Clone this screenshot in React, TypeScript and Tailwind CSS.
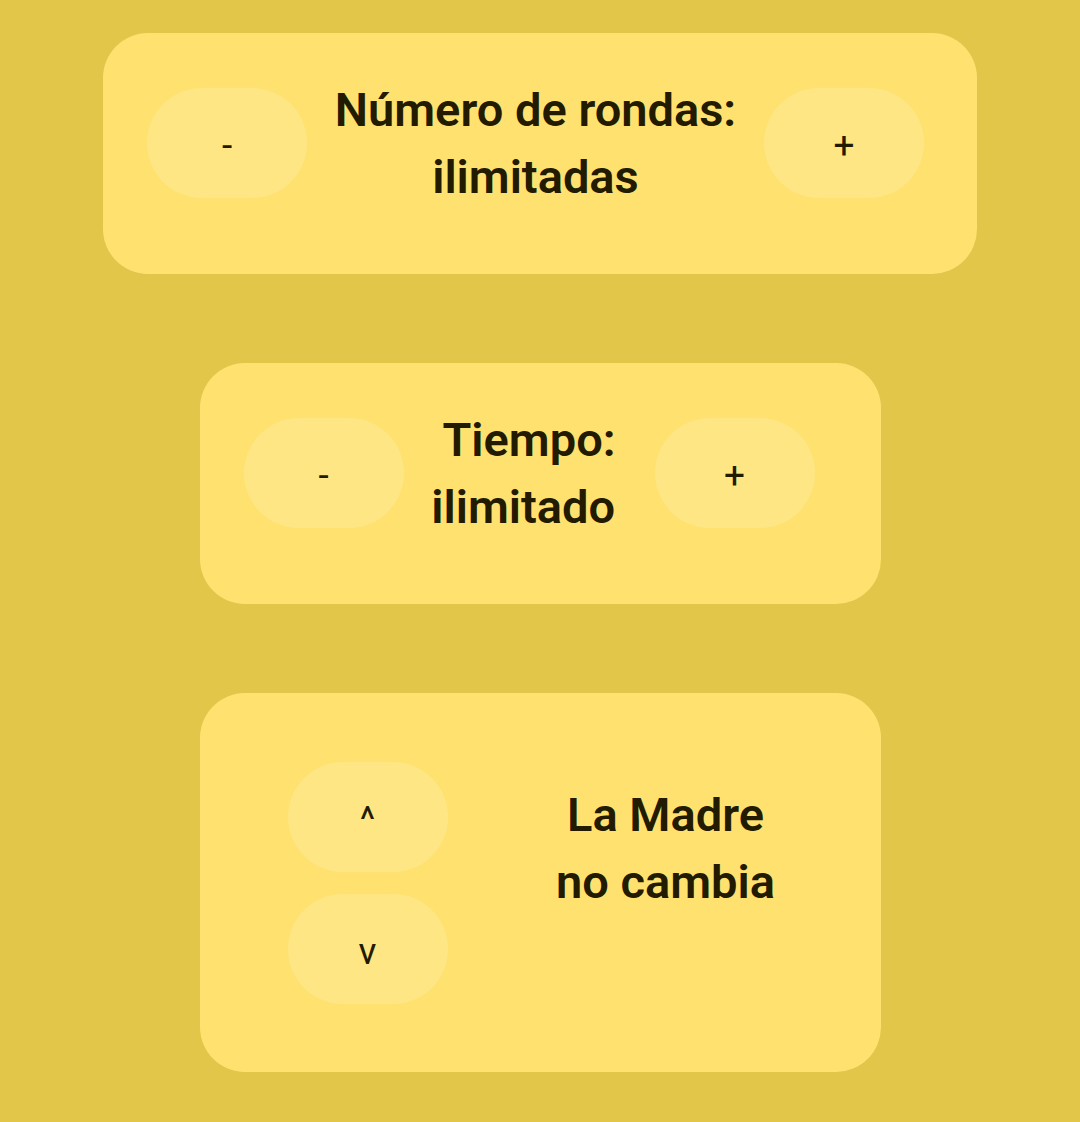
const font = { fontFamily: 'Roboto, "Noto Sans", sans-serif' };

function PillButton({ label }: { label: string }) {
  return (
    <button className="flex h-[110px] w-[160px] shrink-0 items-center justify-center rounded-full bg-[#ffe684] pt-[4px] text-[37px] font-normal leading-none text-[#221b00]">
      {label}
    </button>
  );
}

function Title({ lines }: { lines: string[] }) {
  return (
    <div className="text-center text-[47px] font-semibold leading-[67px] text-[#221b00]">
      {lines.map((line, i) => (
        <div key={i}>{line}</div>
      ))}
    </div>
  );
}

export default function App() {
  return (
    <div style={font} className="flex min-h-[1122px] w-full flex-col items-center gap-[89px] bg-[#e2c64a] pt-[33px]">
      {/* Rounds */}
      <div className="h-[241px] w-[874px] rounded-[45px] bg-[#ffe170] pl-[44px] pt-[43px]">
        <div className="flex items-center">
          <PillButton label="-" />
          <div className="flex w-[457px] justify-center">
            <Title lines={['Número de rondas:', 'ilimitadas']} />
          </div>
          <PillButton label="+" />
        </div>
      </div>

      {/* Time */}
      <div className="h-[241px] w-[681px] rounded-[45px] bg-[#ffe170] pl-[44px] pt-[43px]">
        <div className="flex items-center">
          <PillButton label="-" />
          <div className="flex w-[251px] justify-center">
            <Title lines={['Tiempo:', 'ilimitado\u00a0']} />
          </div>
          <PillButton label="+" />
        </div>
      </div>

      {/* Mother */}
      <div className="flex h-[379px] w-[681px] items-start rounded-[45px] bg-[#ffe170] pl-[88px] pt-[69px]">
        <div className="flex flex-col gap-[22px]">
          <PillButton label="^" />
          <PillButton label="v" />
        </div>
        <div className="mt-[19px] flex flex-1 justify-center pl-[3px]">
          <Title lines={['La Madre', 'no cambia']} />
        </div>
      </div>
    </div>
  );
}
